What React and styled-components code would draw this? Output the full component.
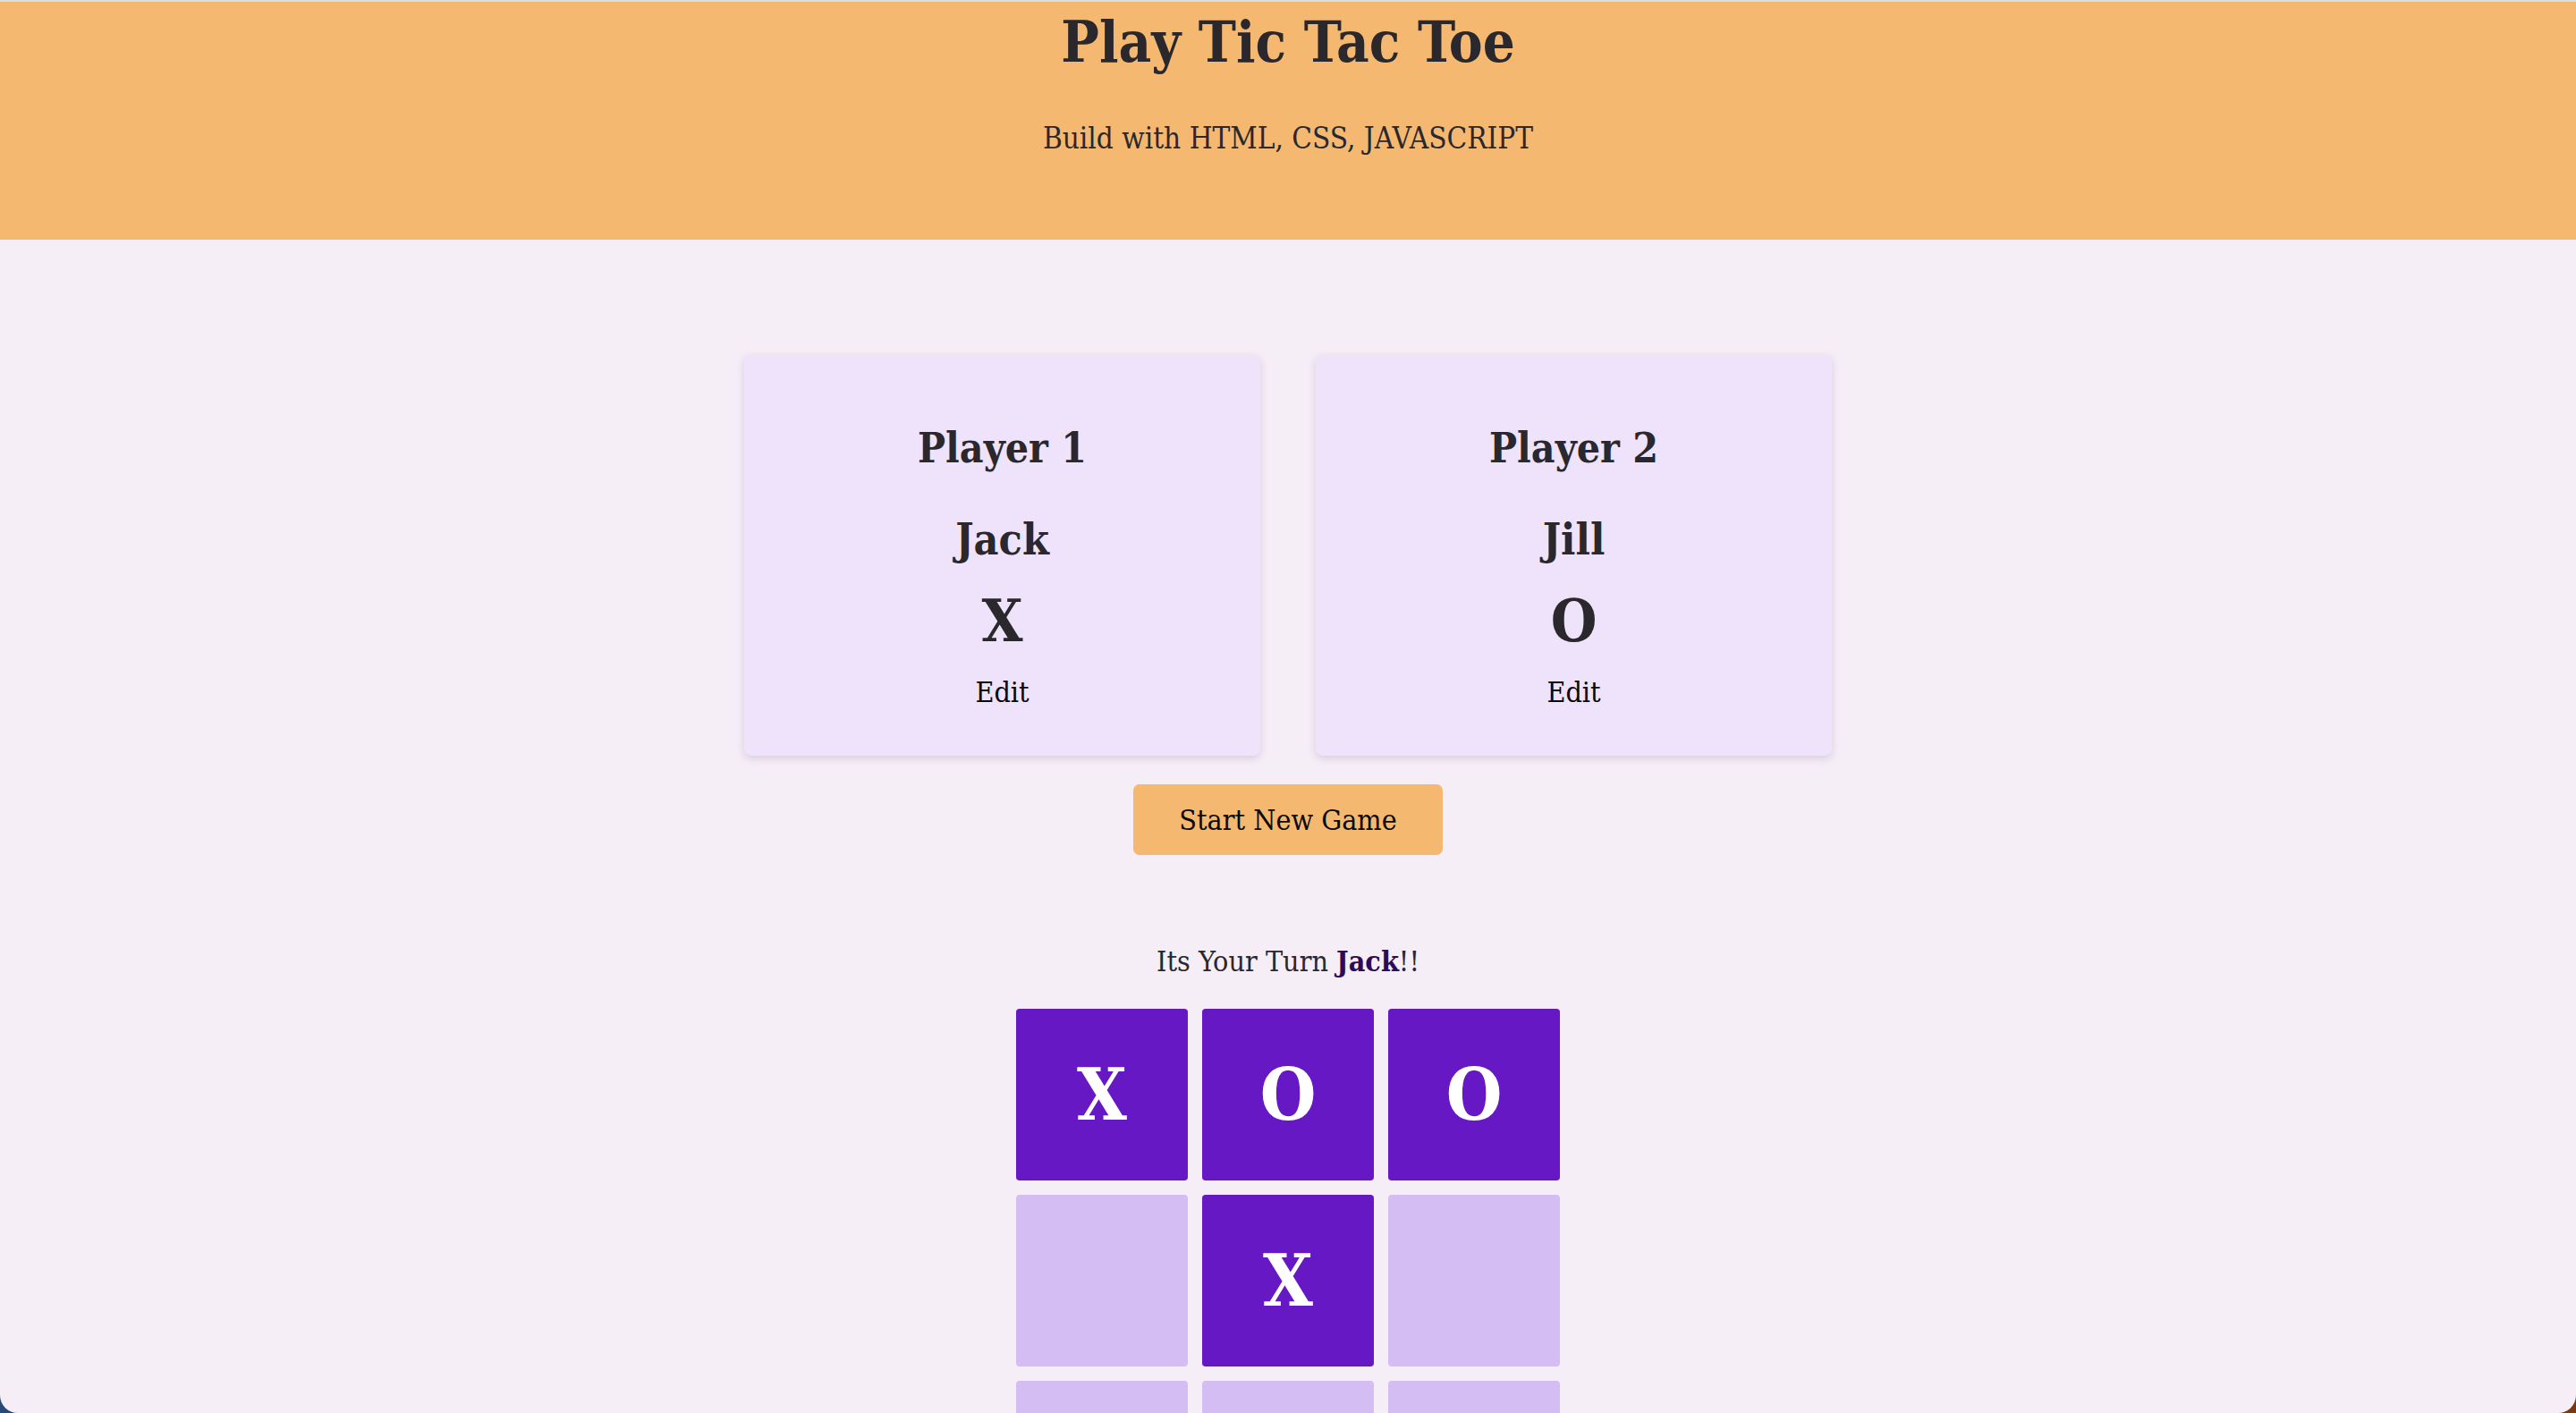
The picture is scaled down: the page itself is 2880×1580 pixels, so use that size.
import React from "react";
import styled, { createGlobalStyle } from "styled-components";

const GlobalStyle = createGlobalStyle`
  html, body {
    margin: 0;
    padding: 0;
    height: 100%;
    background: linear-gradient(90deg, #24497a 0%, #4a3a50 50%, #7a3812 100%);
  }
  #root { height: 100%; }
  * { box-sizing: border-box; }
`;

const FONT = `"Roboto Slab", "DejaVu Serif Condensed", "DejaVu Serif", serif`;

const Window = styled.div`
  height: 100vh;
  display: flex;
  flex-direction: column;
  background: #f5eef6;
  border-top: 2px solid #dcdfe2;
  border-radius: 0 0 20px 20px;
  overflow: hidden;
  font-family: ${FONT};
  color: #2a282d;
`;

const Header = styled.header`
  flex: none;
  height: 266px;
  background: #f4b870;
  text-align: center;
  padding-top: 7px;
`;

const Title = styled.h1`
  margin: 0;
  font-size: 63px;
  line-height: 1.2;
  font-weight: 700;
  padding-top: 1px;
`;

const Subtitle = styled.p`
  margin: 49px 0 0;
  font-size: 33px;
  line-height: 1.2;
  font-weight: 400;
`;

const Main = styled.main`
  display: flex;
  flex-direction: column;
  align-items: center;
`;

const Players = styled.section`
  display: flex;
  gap: 62px;
  margin-top: 129px;
`;

const Card = styled.div`
  width: 577px;
  height: 448px;
  background: #efe3fb;
  border-radius: 8px;
  box-shadow: 0 3px 10px rgba(60, 30, 80, 0.16);
  display: flex;
  flex-direction: column;
  align-items: center;
  padding-top: 77px;
`;

const PlayerLabel = styled.h2`
  margin: 0;
  font-size: 46px;
  line-height: 1.2;
  font-weight: 700;
`;

const PlayerName = styled.h2`
  margin: 46px 0 0;
  font-size: 48px;
  line-height: 1.2;
  font-weight: 700;
`;

const Symbol = styled.div`
  margin-top: 22px;
  font-size: 66px;
  line-height: 1.2;
  font-weight: 700;
`;

const EditButton = styled.button`
  margin-top: 21px;
  padding: 0;
  border: none;
  background: transparent;
  font-family: ${FONT};
  font-size: 32px;
  line-height: 1.2;
  color: #0a0a0a;
  cursor: pointer;
`;

const StartButton = styled.button`
  margin-top: 32px;
  width: 346px;
  height: 79px;
  border: none;
  border-radius: 7px;
  background: #f4b870;
  font-family: ${FONT};
  font-size: 32px;
  color: #0a0a0a;
  display: flex;
  align-items: center;
  justify-content: center;
  cursor: pointer;
`;

const Turn = styled.p`
  margin: 100px 0 0;
  font-size: 32px;
  line-height: 1.2;
  color: #2a282d;
`;

const Active = styled.strong`
  color: #2d0b5a;
  font-weight: 700;
`;

const Board = styled.ol`
  list-style: none;
  margin: 34px 0 0;
  padding: 0;
  display: grid;
  grid-template-columns: repeat(3, 192px);
  grid-auto-rows: 192px;
  gap: 16px;
`;

const Cell = styled.li`
  border-radius: 4px;
  background: ${(p) => (p.$filled ? "#6518c4" : "#d4bdf2")};
  color: #ffffff;
  display: flex;
  align-items: center;
  justify-content: center;
  font-size: 80px;
  font-weight: 700;
`;

const board = ["X", "O", "O", "", "X", "", "", "", ""];

const players = [
  { label: "Player 1", name: "Jack", symbol: "X" },
  { label: "Player 2", name: "Jill", symbol: "O" },
];

export default function App() {
  return (
    <>
      <GlobalStyle />
      <Window>
        <Header>
          <Title>Play Tic Tac Toe</Title>
          <Subtitle>Build with HTML, CSS, JAVASCRIPT</Subtitle>
        </Header>
        <Main>
          <Players>
            {players.map((p) => (
              <Card key={p.label}>
                <PlayerLabel>{p.label}</PlayerLabel>
                <PlayerName>{p.name}</PlayerName>
                <Symbol>{p.symbol}</Symbol>
                <EditButton>Edit</EditButton>
              </Card>
            ))}
          </Players>
          <StartButton>Start New Game</StartButton>
          <Turn>
            Its Your Turn <Active>Jack</Active>!!
          </Turn>
          <Board>
            {board.map((v, i) => (
              <Cell key={i} $filled={v !== ""}>
                {v}
              </Cell>
            ))}
          </Board>
        </Main>
      </Window>
    </>
  );
}
